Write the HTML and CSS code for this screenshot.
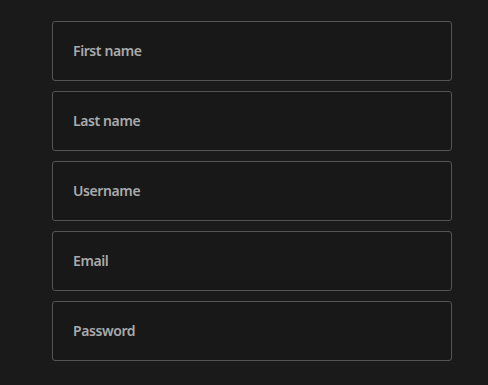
FILE: index.html
```html
<!DOCTYPE html>
<html lang="en">
<head>
    <meta charset="UTF-8">
    <title>Sign up</title>
    <link rel="stylesheet" href="styles.css">
</head>
<body>
    <form class="signup">
        <input class="field" type="text" placeholder="First name">
        <input class="field" type="text" placeholder="Last name">
        <input class="field" type="text" placeholder="Username">
        <input class="field" type="email" placeholder="Email">
        <input class="field" type="password" placeholder="Password">
    </form>
</body>
</html>
```

FILE: styles.css
```css
body {
    margin: 0;
    background: #1a1a1a;
    font-family: 'Noto Sans', sans-serif;
}

.signup {
    display: flex;
    flex-direction: column;
    gap: 10px;
    width: 400px;
    padding: 21px 0 0 52px;
}

.field {
    box-sizing: border-box;
    height: 60px;
    padding: 0 20px 2px;
    border: 1px solid #555;
    border-radius: 3px;
    background: #181818;
    color: #ccc;
    font-family: inherit;
    font-size: 14px;
    font-weight: 600;
    letter-spacing: -0.4px;
    outline: none;
}

.field::placeholder {
    color: #a9aaab;
}
```
